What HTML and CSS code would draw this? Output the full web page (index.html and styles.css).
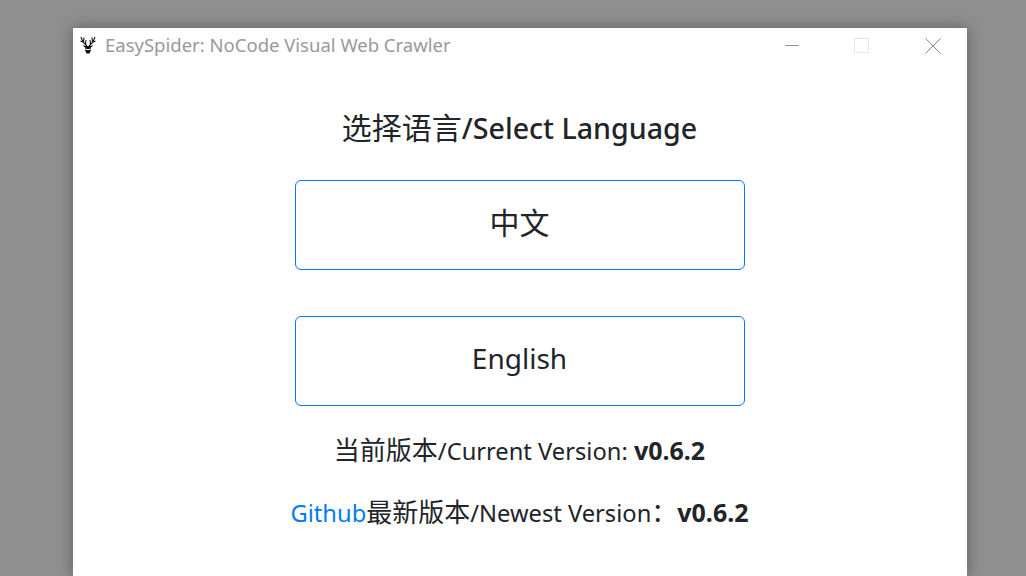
FILE: index.html
```html
<!DOCTYPE html>
<html lang="en">
<head>
    <meta charset="UTF-8">
    <title>EasySpider</title>
    <link rel="stylesheet" href="styles.css">
</head>
<body>
    <div class="window">
        <div class="titlebar">
            <svg class="logo" viewBox="0 0 16 18" width="16" height="18">
                <path d="M7 10 L3 6 L1 1 M3 6 L0.5 5 M3.5 6.5 L4 1.5 M5.5 8.5 L6 4 M9 10 L13 6 L15 1 M13 6 L15.5 5 M12.5 6.5 L12 1.5 M10.5 8.5 L10 4" fill="none" stroke="#111" stroke-width="1.1"/>
                <path d="M2.5 9 L6 10 L10 10 L13.5 9 L10.5 12 L11 14 L9.5 17.5 L6.5 17.5 L5 14 L5.5 12 Z" fill="#111"/>
                <rect x="5.5" y="13" width="5" height="1" fill="#fff"/>
            </svg>
            <span class="app-title">EasySpider: NoCode Visual Web Crawler</span>
            <div class="controls">
                <svg class="ctl" viewBox="0 0 16 16" width="16" height="16"><path d="M2 7.5 H16" stroke="#999" stroke-width="1"/></svg>
                <svg class="ctl" viewBox="0 0 16 16" width="16" height="16"><rect x="0.5" y="0.5" width="14" height="14" fill="none" stroke="#e6e6e6"/></svg>
                <svg class="ctl" viewBox="0 0 16 16" width="16" height="16"><path d="M0.5 0.5 L15.5 15.5 M15.5 0.5 L0.5 15.5" stroke="#8a8a8a" stroke-width="1"/></svg>
            </div>
        </div>
        <div class="content">
            <h2 class="heading"><span class="cjk">选择语言</span><span class="medium">/Select Language</span></h2>
            <a class="lang-btn zh"><span>中文</span></a>
            <a class="lang-btn en"><span>English</span></a>
            <p class="version first"><span class="cjk">当前版本</span>/Current Version: <b>v0.6.2</b></p>
            <p class="version"><a class="link">Github</a><span class="cjk">最新版本</span>/Newest Version<span class="cjk">：</span><b>v0.6.2</b></p>
        </div>
    </div>
</body>
</html>
```

FILE: styles.css
```css
* {
    margin: 0;
    padding: 0;
    box-sizing: border-box;
}
html, body {
    height: 100%;
    overflow: hidden;
}
body {
    background: #8f8f8f;
    padding: 28px 0 0 73px;
    font-family: "Noto Sans", "Noto Sans CJK SC", sans-serif;
    color: #212529;
}
.window {
    width: 894px;
    height: 548px;
    background: #fff;
    box-shadow: 0 0 14px rgba(0,0,0,.35);
}
/* title bar */
.titlebar {
    display: flex;
    align-items: center;
    height: 36px;
    padding-left: 7px;
}
.logo {
    margin-right: 9px;
    margin-top: -2px;
}
.app-title {
    font-size: 18.5px;
    color: #999;
    margin-top: -3px;
}
.controls {
    display: flex;
    margin-left: auto;
    margin-right: 26px;
    gap: 55px;
}
.ctl {
    display: block;
}
/* main */
.content {
    display: flex;
    flex-direction: column;
    align-items: center;
    padding-top: 43px;
    margin-left: -1px;
}
.heading {
    height: 42px;
    font-size: 30px;
    font-weight: 400;
    line-height: 42px;
}
.heading .cjk {
    font-size: 30px;
}
.medium {
    font-size: 28.6px;
    font-weight: 500;
}
.lang-btn {
    display: flex;
    align-items: center;
    justify-content: center;
    width: 450px;
    height: 90px;
    margin-top: 31px;
    border: 1px solid #007bff;
    border-radius: 6px;
}
.zh {
    font-size: 30px;
    padding-bottom: 8px;
}
.en {
    margin-top: 46px;
    font-size: 28px;
    padding-bottom: 6px;
}
.version {
    height: 36px;
    font-size: 23.7px;
    line-height: 36px;
    margin-top: 26px;
}
.cjk {
    font-size: 26px;
}
.link {
    color: #007bff;
}
b {
    font-size: 25px;
    font-weight: 700;
}
```
